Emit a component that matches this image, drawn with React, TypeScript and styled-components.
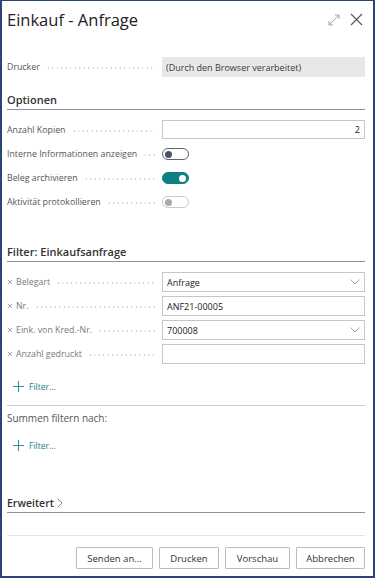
import React from "react";
import styled, { createGlobalStyle, css } from "styled-components";

const Global = createGlobalStyle`
  html, body { margin: 0; padding: 0; background: #ffffff; }
  body { font-family: "Open Sans", "Noto Sans", sans-serif; color: #212121; }
  * { box-sizing: border-box; }
`;

const Frame = styled.div`
  width: 375px;
  height: 578px;
  border: 2px solid #2c4577;
  border-top-width: 1px;
  background: #fff;
  display: flex;
  flex-direction: column;
  overflow: hidden;
`;

const Header = styled.div`
  height: 37px;
  display: flex;
  align-items: center;
  padding: 0 10px 0 5px;
`;

const Title = styled.h1`
  margin: 0;
  flex: 1;
  font-size: 16.5px;
  font-weight: 400;
  color: #222;
`;

const HeaderIcons = styled.div`
  display: flex;
  gap: 10px;
  align-items: center;
`;

const Content = styled.div`
  padding: 0 8px 0 5px;
  display: flex;
  flex-direction: column;
`;

const Row = styled.div<{ $top?: number; $h?: number }>`
  display: flex;
  align-items: center;
  height: ${(p) => p.$h ?? 20}px;
  margin-top: ${(p) => p.$top ?? 0}px;
`;

const LabelCell = styled.div`
  width: 153px;
  display: flex;
  align-items: center;
  padding-right: 5px;
  overflow: hidden;
`;

const Label = styled.span<{ $muted?: boolean }>`
  font-size: 8.8px;
  color: ${(p) => (p.$muted ? "#7a7a7a" : "#555")};
  white-space: nowrap;
  display: flex;
  align-items: center;
  gap: 3px;
`;

const Leader = styled.span`
  flex: 1;
  margin-left: 6px;
  height: 2px;
  background-image: radial-gradient(circle, #c4c4c4 0.5px, transparent 0.9px);
  background-size: 4.5px 2px;
  background-repeat: repeat-x;
  align-self: center;
  margin-top: 2px;
`;

const ControlCell = styled.div`
  flex: 1;
  display: flex;
  align-items: center;
  margin-left: 2px;
`;

const ReadOnlyBox = styled.div`
  width: 100%;
  height: 20px;
  background: #e8e8e8;
  font-size: 9px;
  color: #3a3a3a;
  display: flex;
  align-items: center;
  padding: 0 4px;
`;

const Input = styled.div<{ $right?: boolean; $h?: number }>`
  width: 100%;
  height: ${(p) => p.$h ?? 20}px;
  border: 1px solid #c6c6c6;
  background: #fff;
  font-size: 9px;
  color: #222;
  display: flex;
  align-items: center;
  justify-content: ${(p) => (p.$right ? "flex-end" : "space-between")};
  padding: 0 4px 0 4px;
`;

const SectionHeading = styled.div<{ $top: number; $h?: number; $size?: number }>`
  margin-top: ${(p) => p.$top}px;
  height: ${(p) => p.$h ?? 20}px;
  border-bottom: 1px solid #8a93a3;
  font-size: ${(p) => p.$size ?? 11}px;
  font-weight: 600;
  color: #333;
  display: flex;
  align-items: center;
  gap: 3px;
  padding-bottom: 1px;
`;

const Track = styled.span<{ $state: "off" | "on" | "disabled" }>`
  width: 27px;
  height: 12px;
  border-radius: 6px;
  display: inline-flex;
  align-items: center;
  padding: 0 2px;
  ${(p) =>
    p.$state === "on"
      ? css`
          background: #0e7f86;
          border: 1px solid #0e7f86;
          justify-content: flex-end;
        `
      : p.$state === "off"
      ? css`
          background: #fff;
          border: 1px solid #5b6473;
          justify-content: flex-start;
        `
      : css`
          background: #fff;
          border: 1px solid #c9c9c9;
          justify-content: flex-start;
        `}
`;

const Knob = styled.span<{ $state: "off" | "on" | "disabled" }>`
  width: 7px;
  height: 7px;
  border-radius: 50%;
  background: ${(p) =>
    p.$state === "on" ? "#fff" : p.$state === "off" ? "#4a5263" : "#a9a9a9"};
`;

const AddFilter = styled.div<{ $top: number }>`
  margin-top: ${(p) => p.$top}px;
  height: 20px;
  display: flex;
  align-items: center;
  gap: 5px;
  padding-left: 6px;
  font-size: 8.5px;
  color: #137f86;
`;

const Separator = styled.div<{ $top: number; $color?: string }>`
  margin-top: ${(p) => p.$top}px;
  height: 1px;
  background: ${(p) => p.$color ?? "#c9ced6"};
`;

const Plain = styled.div<{ $top: number }>`
  margin-top: ${(p) => p.$top}px;
  height: 20px;
  display: flex;
  align-items: center;
  font-size: 10px;
  color: #555;
`;

const Footer = styled.div`
  margin-top: 11px;
  display: flex;
  justify-content: flex-end;
  gap: 6px;
`;

const Button = styled.button<{ $w: number }>`
  width: ${(p) => p.$w}px;
  height: 22px;
  border: 1px solid #bdbdbd;
  background: #fff;
  font-family: inherit;
  font-size: 9.5px;
  color: #333;
  padding: 0;
  border-radius: 1px;
`;

const X = () => (
  <svg width="6" height="6" viewBox="0 0 8 8">
    <path d="M1 1L7 7M7 1L1 7" stroke="#8a8a8a" strokeWidth="1" fill="none" />
  </svg>
);

const Chevron = () => (
  <svg width="10" height="6" viewBox="0 0 10 6">
    <path d="M0.5 0.5L5 5L9.5 0.5" stroke="#9a9a9a" strokeWidth="0.9" fill="none" />
  </svg>
);

const Plus = () => (
  <svg width="11" height="11" viewBox="0 0 11 11">
    <path d="M5.5 0V11M0 5.5H11" stroke="#2f8f94" strokeWidth="1" fill="none" />
  </svg>
);

const Expand = () => (
  <svg width="12" height="12" viewBox="0 0 12 12">
    <path
      d="M1 11L11 1M7 1H11V5M1 7V11H5"
      stroke="#a0a0a0"
      strokeWidth="1"
      fill="none"
    />
  </svg>
);

const Close = () => (
  <svg width="13" height="13" viewBox="0 0 13 13">
    <path d="M1 1L12 12M12 1L1 12" stroke="#5a5a5a" strokeWidth="1.2" fill="none" />
  </svg>
);

const ChevronRight = () => (
  <svg width="6" height="10" viewBox="0 0 6 10">
    <path d="M0.5 0.5L5 5L0.5 9.5" stroke="#777" strokeWidth="0.9" fill="none" />
  </svg>
);

type FieldProps = { label: string; removable?: boolean; children: React.ReactNode; top?: number; h?: number };

const Field = ({ label, removable, children, top, h }: FieldProps) => (
  <Row $top={top} $h={h}>
    <LabelCell>
      <Label $muted={removable}>
        {removable && <X />}
        {label}
      </Label>
      <Leader />
    </LabelCell>
    <ControlCell>{children}</ControlCell>
  </Row>
);

export default function App() {
  return (
    <>
      <Global />
      <Frame>
        <Header>
          <Title>Einkauf - Anfrage</Title>
          <HeaderIcons>
            <Expand />
            <Close />
          </HeaderIcons>
        </Header>
        <Content>
          <Field label="Drucker" top={19}>
            <ReadOnlyBox>(Durch den Browser verarbeitet)</ReadOnlyBox>
          </Field>

          <SectionHeading $top={13}>Optionen</SectionHeading>
          <Field label="Anzahl Kopien" top={10} h={19}>
            <Input $right $h={19}>2</Input>
          </Field>
          <Field label="Interne Informationen anzeigen" top={3} h={24}>
            <Track $state="off"><Knob $state="off" /></Track>
          </Field>
          <Field label="Beleg archivieren" h={24}>
            <Track $state="on"><Knob $state="on" /></Track>
          </Field>
          <Field label="Aktivität protokollieren" h={24}>
            <Track $state="disabled"><Knob $state="disabled" /></Track>
          </Field>

          <SectionHeading $top={28}>Filter: Einkaufsanfrage</SectionHeading>
          <Field label="Belegart" removable top={10}>
            <Input>
              Anfrage
              <Chevron />
            </Input>
          </Field>
          <Field label="Nr." removable top={4}>
            <Input>ANF21-00005</Input>
          </Field>
          <Field label="Eink. von Kred.-Nr." removable top={4}>
            <Input>
              700008
              <Chevron />
            </Input>
          </Field>
          <Field label="Anzahl gedruckt" removable top={4}>
            <Input />
          </Field>

          <AddFilter $top={12}>
            <Plus />
            Filter...
          </AddFilter>
          <Separator $top={9} />
          <Plain $top={2}>Summen filtern nach:</Plain>
          <AddFilter $top={7}>
            <Plus />
            Filter...
          </AddFilter>

          <SectionHeading $top={40} $h={18} $size={10.5}>
            Erweitert
            <ChevronRight />
          </SectionHeading>
          <Separator $top={22} $color="#e3e3e3" />
          <Footer>
            <Button $w={77}>Senden an...</Button>
            <Button $w={60}>Drucken</Button>
            <Button $w={65}>Vorschau</Button>
            <Button $w={69}>Abbrechen</Button>
          </Footer>
        </Content>
      </Frame>
    </>
  );
}
